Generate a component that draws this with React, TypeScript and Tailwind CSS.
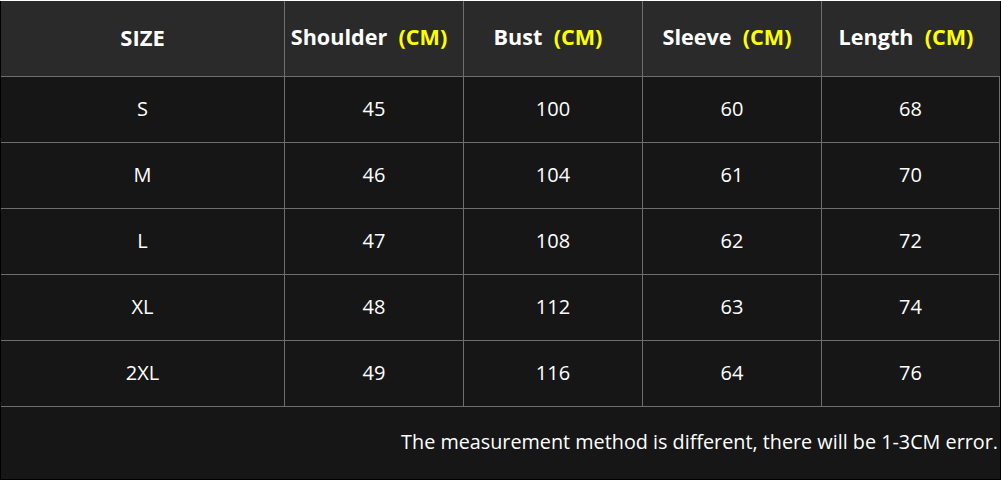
import React from 'react'

const HEADERS = ['Shoulder', 'Bust', 'Sleeve', 'Length']

const ROWS = [
    ['S', '45', '100', '60', '68'],
    ['M', '46', '104', '61', '70'],
    ['L', '47', '108', '62', '72'],
    ['XL', '48', '112', '63', '74'],
    ['2XL', '49', '116', '64', '76'],
]

const COL_WIDTHS = ['w-[284px]', 'w-[179px]', 'w-[179px]', 'w-[179px]', 'w-[178px]']

const App = () => {
    return (
        <div className="w-[1001px] h-[480px] bg-black font-['Open_Sans',sans-serif]">
            <div className="w-[999px] h-[478px] ml-px mt-px bg-[#161616] flex flex-col">
                <div className="flex h-[76px] bg-[#2a2a2a] border-b border-[#6e6e6e]">
                    <div className={`${COL_WIDTHS[0]} border-r border-[#6e6e6e] flex items-center justify-center pb-[2px] text-white font-bold text-[22px]`}>
                        SIZE
                    </div>
                    {HEADERS.map((h, i) => (
                        <div
                            key={h}
                            className={`${COL_WIDTHS[i + 1]} ${i < 3 ? 'border-r border-[#6e6e6e]' : ''} flex items-center justify-center pb-[2px] pr-[10px] text-white font-bold text-[21.6px] whitespace-pre`}
                        >
                            {h}  <span className="text-[#ffff00]">(CM)</span>
                        </div>
                    ))}
                </div>
                {ROWS.map((row, r) => (
                    <div key={r} className="flex h-[66px] border-b border-[#6e6e6e]">
                        {row.map((v, i) => (
                            <div
                                key={i}
                                className={`${COL_WIDTHS[i]} border-r border-[#6e6e6e] flex items-center justify-center pb-[2px] text-white text-[20px]`}
                            >
                                {v}
                            </div>
                        ))}
                    </div>
                ))}
                <div className="flex-1 flex items-center justify-end pr-[2px] pb-[3px] text-white text-[19.8px]">
                    The measurement method is different, there will be 1-3CM error.
                </div>
            </div>
        </div>
    )
}

export default App
